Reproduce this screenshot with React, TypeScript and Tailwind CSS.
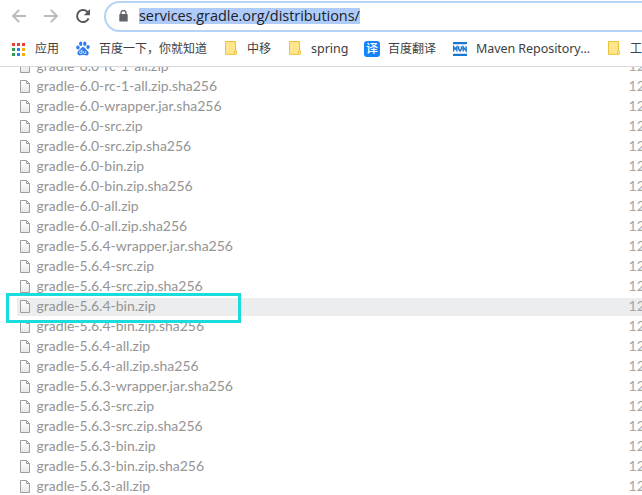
import React from "react";

const files = [
  "6.0-rc-1-all.zip",
  "6.0-rc-1-all.zip.sha256",
  "6.0-wrapper.jar.sha256",
  "6.0-src.zip",
  "6.0-src.zip.sha256",
  "6.0-bin.zip",
  "6.0-bin.zip.sha256",
  "6.0-all.zip",
  "6.0-all.zip.sha256",
  "5.6.4-wrapper.jar.sha256",
  "5.6.4-src.zip",
  "5.6.4-src.zip.sha256",
  "5.6.4-bin.zip",
  "5.6.4-bin.zip.sha256",
  "5.6.4-all.zip",
  "5.6.4-all.zip.sha256",
  "5.6.3-wrapper.jar.sha256",
  "5.6.3-src.zip",
  "5.6.3-src.zip.sha256",
  "5.6.3-bin.zip",
  "5.6.3-bin.zip.sha256",
  "5.6.3-all.zip",
];

const SELECTED = "5.6.4-bin.zip";

function Arrow({ flip = false }: { flip?: boolean }) {
  return (
    <svg width="16" height="16" viewBox="0 0 16 16" className={flip ? "-scale-x-100" : ""}>
      <path d="M15 8H2.6M8.2 1.8 2 8l6.2 6.2" fill="none" stroke="#b9babc" strokeWidth="1.9" />
    </svg>
  );
}

function Reload() {
  return (
    <svg width="16" height="16" viewBox="0 0 16 16">
      <path d="M13.6 10.4A6 6 0 1 1 12.3 3.8L14 5.6" fill="none" stroke="#55585c" strokeWidth="2" />
      <path d="M15 1v6.2H8.8z" fill="#55585c" />
    </svg>
  );
}

function Lock() {
  return (
    <svg width="9" height="12" viewBox="0 0 9 12">
      <path d="M2 5V3a2.5 2.5 0 0 1 5 0v2" fill="none" stroke="#5f6368" strokeWidth="1.3" />
      <rect x="0.3" y="4" width="8.4" height="7.6" rx="0.9" fill="#5f6368" />
    </svg>
  );
}

function Apps() {
  const colors = ["#ea3d34", "#ea3d34", "#ea3d34", "#2f9e52", "#2a84f0", "#f6b20a", "#2f9e52", "#2a84f0", "#f6b20a"];
  return (
    <svg width="13" height="13" viewBox="0 0 13 13" shapeRendering="crispEdges">
      {colors.map((c, i) => (
        <rect key={i} x={(i % 3) * 5} y={Math.floor(i / 3) * 5} width="3" height="3" fill={c} />
      ))}
    </svg>
  );
}

function Paw() {
  return (
    <svg width="14" height="15" viewBox="0 0 14 15" fill="#2c7df0" className="relative -top-px">
      <ellipse cx="1.9" cy="6.5" rx="1.7" ry="2.1" />
      <ellipse cx="4.7" cy="2.8" rx="1.6" ry="2.2" />
      <ellipse cx="8.8" cy="2.7" rx="1.6" ry="2.2" />
      <ellipse cx="12" cy="6" rx="1.7" ry="2.1" />
      <path d="M7 6c1.5 0 2.2 1.6 3.3 2.7 1.3 1.2 2.8 2.1 2.3 4-.4 1.7-2 2-3.3 1.6-1.4-.3-3.1-.3-4.5 0-1.8.4-3.2-.2-3.4-2-.2-1.7 1.3-2.6 2.4-3.7C4.9 7.5 5.5 6 7 6z" />
      <path d="M5.9 8.5v4H4.7a1.2 1.2 0 0 1 0-2.4h1.2M7.6 10v1.8q0 .8.7.8h1.4V10" fill="none" stroke="#fff" strokeWidth=".7" />
    </svg>
  );
}

function Folder() {
  return (
    <svg width="12" height="14" viewBox="0 0 12 14" className="relative -top-px">
      <path d="M.5.5h10v12.9H.5z" fill="#ffe58c" stroke="#e9c340" />
      <rect x="9.5" y="9.5" width="2" height="3.9" rx=".8" fill="#ffe58c" stroke="#e9c340" />
    </svg>
  );
}

function Maven() {
  return (
    <svg width="14" height="14" viewBox="0 0 14 14">
      <path d="M0 0h14v2H0zM0 12h14v2H0z" fill="#1976d2" />
      <path d="M0 2h14v1H0zM0 11h14v1H0z" fill="#cfdcec" />
      <path d="M.7 9.5V4.8L2.3 7 3.9 4.8v4.7M5.7 4.3v2.7l1.4 2 1.4-2V4.3M10.2 9.5V4.9l2.9 4V4.3" fill="none" stroke="#1976d2" strokeWidth="1.4" />
    </svg>
  );
}

function FileIcon() {
  return (
    <svg width="11" height="13" viewBox="0 0 11 13" className="mb-px mr-[5.6px] shrink-0">
      <defs>
        <linearGradient id="paper" x1="0" y1="0" x2="0" y2="1">
          <stop offset="0" stopColor="#fff" />
          <stop offset="1" stopColor="#e8e8e8" />
        </linearGradient>
      </defs>
      <path d="M.5.5H6.5l3 3v9H.5z" fill="url(#paper)" stroke="#9d9d9d" />
      <path d="M6.5.5v3H9.5" fill="none" stroke="#9d9d9d" />
    </svg>
  );
}

function Bookmark({ icon, className, label }: { icon: React.ReactNode; className: string; label: React.ReactNode }) {
  return (
    <div className={`flex shrink-0 items-center whitespace-nowrap ${className}`}>
      {icon}
      {label}
    </div>
  );
}

export default function App() {
  return (
    <div className="relative h-[495px] w-[642px] overflow-hidden bg-white font-['Lato',sans-serif]">
      <header className="h-[67px] border-b border-[#d7d9dc] bg-white">
        <div className="flex h-8 items-center overflow-hidden">
          <div className="ml-[11px] flex w-[93px] shrink-0 items-center gap-4">
            <Arrow />
            <Arrow flip />
            <Reload />
          </div>
          <div className="mt-px flex h-[31px] w-[600px] shrink-0 items-center rounded-full border-2 border-[#b5d3f7] pb-px pl-[13px]">
            <Lock />
            <span className="ml-[11px] flex h-4 w-[221px] shrink-0 items-center whitespace-nowrap bg-[#aecbfa] font-['Open_Sans',sans-serif] text-[14.5px] tracking-[-0.05px] text-[#202124]">
              services.gradle.org/distributions/
            </span>
          </div>
        </div>
        <nav className="flex h-[34px] items-center pl-3 font-['Noto_Sans','Noto_Sans_CJK_SC',sans-serif] text-[12px] text-[#3c4043]">
          <Bookmark className="w-[64px] gap-[10px]" icon={<Apps />} label="应用" />
          <Bookmark className="w-[149px] gap-[9px]" icon={<Paw />} label="百度一下，你就知道" />
          <Bookmark className="w-[64px] gap-[10px]" icon={<Folder />} label="中移" />
          <Bookmark className="w-[75px] gap-[10px]" icon={<Folder />} label={<span className="text-[12.5px]">spring</span>} />
          <Bookmark
            className="w-[89px] gap-[8px]"
            icon={<span className="flex h-4 w-4 items-center justify-center rounded-[3px] bg-[#1484fa] text-[12px] font-medium leading-none text-white">译</span>}
            label="百度翻译"
          />
          <Bookmark
            className="w-[155px] gap-[9px]"
            icon={<Maven />}
            label={<span className="text-[12.5px] tracking-[-0.06px]">Maven Repository...</span>}
          />
          <Bookmark className="w-[64px] gap-[10px]" icon={<Folder />} label="工具" />
        </nav>
      </header>
      <main className="h-[428px] overflow-hidden text-[14px] text-[#949494]">
        <ul className="-mt-[10px] pl-[17px]">
          {files.map((name) => (
            <li key={name} className="flex h-5 items-center">
              <div className={`flex h-[18px] w-[625px] items-center overflow-hidden pl-[3px] ${name === SELECTED ? "bg-[#ebedef]" : ""}`}>
                <FileIcon />
                <span className="w-[592px] shrink-0 whitespace-nowrap pb-[2px] leading-[18px]">gradle-{name}</span>
                <span className="shrink-0 pb-[2px] leading-[18px] text-[#a6a6a6]">12</span>
              </div>
            </li>
          ))}
        </ul>
      </main>
      <div className="absolute left-[6px] top-[293px] h-[30px] w-[235px] border-[3px] border-[#19dcdc]" />
    </div>
  );
}
